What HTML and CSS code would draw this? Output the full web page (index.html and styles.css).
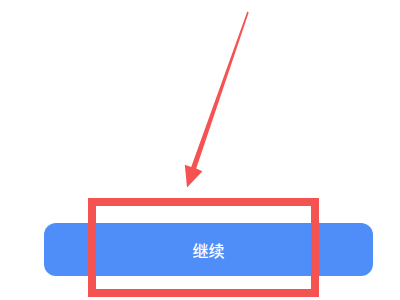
FILE: index.html
```html
<!DOCTYPE html>
<html lang="zh">
<head>
<meta charset="utf-8">
<link rel="stylesheet" href="styles.css">
</head>
<body>
<div class="page">
  <button class="continue">继续</button>
  <div class="highlight"></div>
  <svg class="arrow" width="400" height="300" viewBox="0 0 400 300">
    <polygon points="247.3,11.6 248.7,12.4 196.2,168.6 202.5,171.2 187,187.5 184.8,164.8 191.2,167" fill="#f55252"/>
  </svg>
</div>
</body>
</html>
```

FILE: styles.css
```css
html, body {
  margin: 0;
  padding: 0;
  background: #ffffff;
}
.page {
  position: relative;
  width: 400px;
  height: 300px;
  box-sizing: border-box;
  padding: 223px 27px 0 44px;
  overflow: hidden;
}
.continue {
  display: flex;
  align-items: center;
  justify-content: center;
  width: 100%;
  height: 53px;
  border: none;
  border-radius: 12px;
  background: #4f8ef8;
  color: #ffffff;
  font-family: "Noto Sans CJK SC", "Noto Sans", sans-serif;
  font-size: 16px;
  font-weight: 500;
  padding: 0;
  margin: 0;
}
.highlight {
  position: absolute;
  left: 88px;
  top: 198px;
  width: 231px;
  height: 99px;
  box-sizing: border-box;
  border: 8px solid #f55252;
}
.arrow {
  position: absolute;
  left: 0;
  top: 0;
}
```
